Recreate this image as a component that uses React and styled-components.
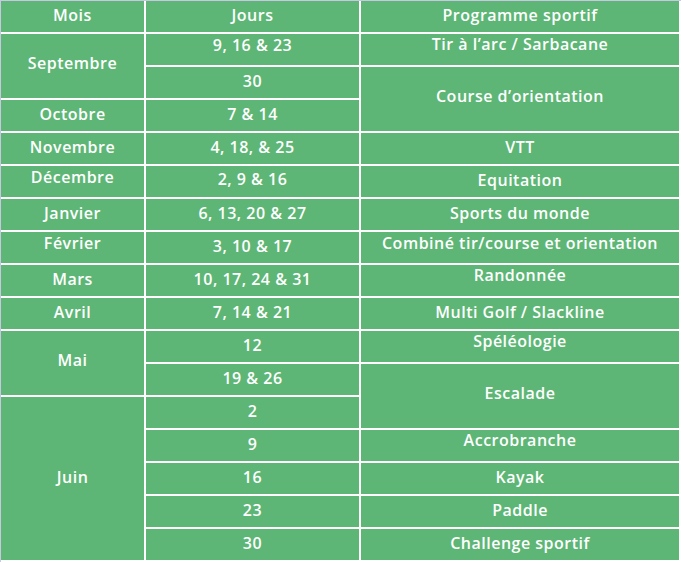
import styled, { createGlobalStyle } from 'styled-components'

const GlobalStyle = createGlobalStyle`
  html, body {
    margin: 0;
    padding: 0;
    background: #ffffff;
  }
`

const Frame = styled.div`
  width: 680px;
  border-top: 1px solid #c9c8e4;
  border-left: 1px solid #c9c8e4;
`

const Grid = styled.div`
  display: grid;
  grid-template-columns: 145px 215px 320px;
  grid-auto-rows: 33px;
  background: #5db675;
`

const Cell = styled.div`
  grid-row: span ${(p) => p.$span || 1};
  display: flex;
  align-items: center;
  justify-content: center;
  box-sizing: border-box;
  border-right: 2px solid #ffffff;
  border-bottom: 2px solid #ffffff;
  padding-bottom: ${(p) => 4 + (p.$lift || 0) * 2}px;
  color: #ffffff;
  font-family: 'Open Sans', sans-serif;
  font-weight: 600;
  font-size: 16px;
  letter-spacing: 0.5px;
  white-space: nowrap;
`

// lift = how many px the text sits above the middle of its cell
const cells = [
  { t: 'Mois' }, { t: 'Jours' }, { t: 'Programme sportif' },
  { t: 'Septembre', span: 2, lift: 1 }, { t: '9, 16 & 23', lift: 3 }, { t: 'Tir à l’arc / Sarbacane', lift: 4 },
  { t: '30' }, { t: 'Course d’orientation', span: 2, lift: 1 },
  { t: 'Octobre' }, { t: '7 & 14' },
  { t: 'Novembre' }, { t: '4, 18, & 25' }, { t: 'VTT' },
  { t: 'Décembre', lift: 3 }, { t: '2, 9 & 16', lift: 1 }, { t: 'Equitation' },
  { t: 'Janvier' }, { t: '6, 13, 20 & 27' }, { t: 'Sports du monde' },
  { t: 'Février', lift: 3 }, { t: '3, 10 & 17' }, { t: 'Combiné tir/course et orientation', lift: 3 },
  { t: 'Mars' }, { t: '10, 17, 24 & 31' }, { t: 'Randonnée', lift: 4 },
  { t: 'Avril' }, { t: '7, 14 & 21' }, { t: 'Multi Golf / Slackline' },
  { t: 'Mai', span: 2, lift: 1 }, { t: '12' }, { t: 'Spéléologie', lift: 4 },
  { t: '19 & 26' }, { t: 'Escalade', span: 2, lift: 1 },
  { t: 'Juin', span: 5 }, { t: '2' },
  { t: '9' }, { t: 'Accrobranche', lift: 4 },
  { t: '16' }, { t: 'Kayak' },
  { t: '23' }, { t: 'Paddle' },
  { t: '30' }, { t: 'Challenge sportif' },
]

export default function App() {
  return (
    <>
      <GlobalStyle />
      <Frame>
        <Grid>
          {cells.map((c, i) => (
            <Cell key={i} $span={c.span} $lift={c.lift}>
              {c.t}
            </Cell>
          ))}
        </Grid>
      </Frame>
    </>
  )
}
